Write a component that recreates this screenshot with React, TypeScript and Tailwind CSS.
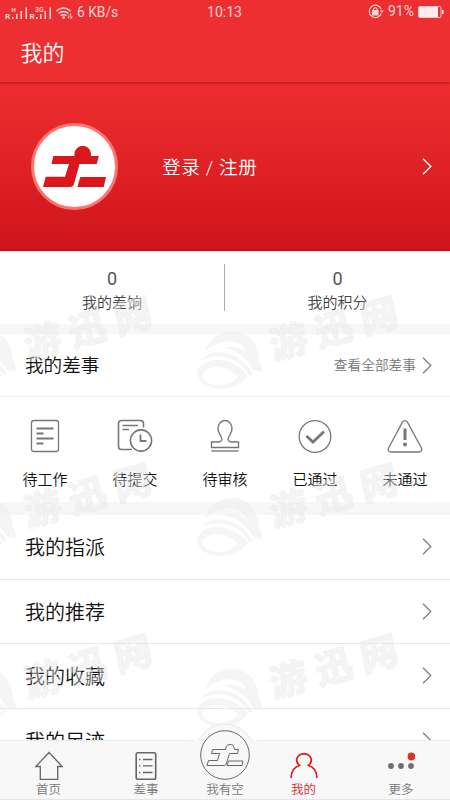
import React from 'react';

const Chevron: React.FC<{ className?: string }> = ({ className = 'text-[#808080]' }) => (
  <svg className={`h-[17px] w-[10px] shrink-0 ${className}`} viewBox="0 0 10 17" fill="none" stroke="currentColor" strokeWidth="1.3">
    <path d="M1 .8 8.8 8.5 1 16.2" />
  </svg>
);

const StatusBar: React.FC = () => (
  <div className="flex h-6 items-center justify-between pl-[5px] pr-[6px] font-normal text-[#ffd6d6]">
    <div className="flex w-[180px] items-center">
      <svg width="70" height="17" viewBox="0 0 70 17" fill="currentColor">
        <text x="0" y="15" fontSize="8" fontWeight="700">R</text>
        <text x="6.500" y="7.500" fontSize="6" fontWeight="700">H</text>
        <path d="M7 13h1.500v2H7zM11 10h1.500v5H11zM15.500 7H17v8h-1.500zM20.500 3.500H22V15h-1.500z" />
        <text x="24.500" y="15" fontSize="8" fontWeight="700">R</text>
        <text x="30" y="8" fontSize="7" fontWeight="500">3G</text>
        <path d="M31 13h1.500v2H31zM35 10h1.500v5H35zM39.500 7H41v8h-1.500zM44.500 3.500H46V15h-1.500z" />
        <g fill="none" stroke="currentColor" strokeWidth="1.500">
          <path d="M51.500 7q7-6 14 0M53.500 9.500q5-4 10 0M55.700 11.700q3-2 6 0" />
        </g>
        <circle cx="58.700" cy="13.500" r="1.300" />
        <path d="m62.800 14.500 1.500-5V14zM65.200 9.500h1v3h1.800l-2.300 3z" />
      </svg>
      <span className="ml-[2px] text-[13.800px]">6 KB/s</span>
    </div>
    <span className="text-[14px]">10:13</span>
    <div className="flex w-[180px] items-center justify-end">
      <svg className="-mt-px" width="16" height="15" viewBox="0 0 16 15" fill="none" stroke="currentColor" strokeWidth="1.100">
        <path d="M13.300 9.500A6.200 6.200 0 1 1 13.200 5" />
        <path d="m11.800 6.500 2.200 2.500 1.800-2.500z" fill="currentColor" stroke="none" />
        <path d="M4.500 6.500h5.500V11H4.500z" fill="currentColor" />
        <path d="M5.500 6.500V5q1.800-2.500 3.600 0v1.500" />
      </svg>
      <span className="ml-[4px] -mt-px text-[14px]">91%</span>
      <svg className="ml-[4px] -mt-px" width="26" height="12" viewBox="0 0 26 12" fill="#ffecec">
        <rect x=".5" y=".5" width="22.500" height="11" rx="1" fill="none" stroke="#ffc4c4" />
        <path d="M1 1h19v10H1zM24 4h1.500v4H24z" />
      </svg>
    </div>
  </div>
);

const Avatar: React.FC = () => (
  <div className="flex size-[87px] items-center justify-center rounded-full border-[3.500px] border-[#fb7672] bg-white">
    <svg className="h-[41px] w-[63px]" viewBox="0 0 63 41" fill="#da171d">
      <path d="M10.300 10h21.300a8.300 8.300 0 1 1 16.200 0h8l-2 8H36.500L31 38q-1 3-4 3H0l2.700-10.200H22L26 18H8.500z" />
      <path d="M37.300 31H63l-2.300 10H34.300z" />
    </svg>
  </div>
);

const tasks = [
  {
    label: '待工作',
    icon: (
      <>
        <rect x="4.500" y="3.500" width="27" height="31" rx="2.500" />
        <path d="M9.500 11.500h17M9.500 16.500h7M9.500 21.500h17M9.500 26.500h7" strokeWidth="1.800" />
      </>
    ),
  },
  {
    label: '待提交',
    icon: (
      <>
        <path d="M15 32.500H4.500q-3 0-3-3v-23q0-3 3-3h19q3 0 3 3v4" strokeWidth="1.600" />
        <path d="M5.500 8.500h15.500M5.500 12.500h6.500" strokeWidth="1.600" />
        <circle cx="24" cy="23.500" r="10.600" strokeWidth="1.600" />
        <path d="M23.500 17.500v6.500h6" strokeWidth="1.800" />
      </>
    ),
  },
  {
    label: '待审核',
    icon: (
      <>
        <path d="M4.500 30.500v-5.500h7.500q4.500-1 2-5.500c-1.500-3-3.500-5-3-9 .5-4 3.500-7 7-7s6.500 3 7 7c.5 4-1.500 6-3 9q-2.500 4.500 2 5.500h7.500v5.500z" strokeWidth="1.400" />
        <path d="M4.500 34h27" strokeWidth="1.400" />
      </>
    ),
  },
  {
    label: '已通过',
    icon: (
      <>
        <circle cx="18" cy="19.500" r="15.800" />
        <path d="m9.500 19 6.500 6L27 14.500" strokeWidth="2.800" />
      </>
    ),
  },
  {
    label: '未通过',
    icon: (
      <>
        <path d="M15.500 5.200q2.500-3 5 0l13.800 25.500q1.500 4-2.300 4.300H4q-3.800-.3-2.300-4.300z" />
        <path d="M18 11.500V23" strokeWidth="3" />
        <circle cx="18" cy="27.500" r="2" fill="currentColor" stroke="none" />
      </>
    ),
  },
];

const stats = ['我的差饷', '我的积分'];
const links = ['我的指派', '我的推荐', '我的收藏', '我的足迹'];

// one stamp is the globe plus its slanted caption
const WatermarkStamp: React.FC<{ x: number; y: number }> = ({ x, y }) => (
  <g transform={`translate(${x} ${y})`}>
    <path d="M8 20Q15 0 37 0q22 2 25 28l4 13-10-2Q46 20 26 17q13-3 23 4Q45 10 34 10 18 11 8 20z" />
    <path d="M4 30Q14 18 30 22q17 5 26 21l-4 1Q44 29 27 26q-14-2-23 4z" />
    <path d="M1 38Q9 27 25 29q18 4 26 16-12 13-27 13Q5 57 1 46q-1-4 0-8zm4 6q2 9 14 10 13 1 22-8-8-9-20-10-12 0-16 8z" fillRule="evenodd" />
    <text x="78" y="29" transform="rotate(-16 78 29) skewX(-4)" fontSize="38" fontWeight="900" letterSpacing="9" stroke="#e8e8e8" strokeOpacity=".3">
      游迅网
    </text>
  </g>
);

const Watermark: React.FC = () => (
  <svg className="pointer-events-none absolute inset-0" width="450" height="741" viewBox="0 0 450 741" fill="#e8e8e8" fillOpacity=".45">
    {[331, 498, 669].map((y) => (
      <React.Fragment key={y}>
        <WatermarkStamp x={-49} y={y} />
        <WatermarkStamp x={197} y={y} />
      </React.Fragment>
    ))}
  </svg>
);

const App: React.FC = () => {
  return (
    <div className="relative flex h-[800px] w-[450px] flex-col overflow-hidden bg-white font-[Roboto,'Noto_Sans_CJK_SC',sans-serif] font-[350] text-[#111]">
      <header className="relative z-10 h-[82px] shrink-0 bg-[#ed2f31] text-white shadow-[0_1px_3px_rgba(100,0,0,0.5)]">
        <StatusBar />
        <h1 className="mt-[13px] pl-[20.500px] text-[22px] leading-[34px]">我的</h1>
      </header>

      <section className="flex h-[169px] shrink-0 items-center border-b border-[#d8000c] bg-linear-to-b from-[#ee2e30] to-[#cf131b] pl-[31px] pr-[18px] text-white">
        <Avatar />
        <span className="ml-[44px] flex-1 pt-[4px] text-[18.700px] tracking-[0.600px]">登录 / 注册</span>
        <Chevron className="text-white" />
      </section>

      <section className="flex h-[73px] shrink-0 pt-[13px]">
        {stats.map((label, i) => (
          <div key={label} className={`flex h-[47px] w-1/2 flex-col items-center ${i === 0 ? 'border-r border-[#aaa]' : ''}`}>
            <span className="mt-[4px] text-[18px] font-normal leading-[22px] text-[#555]">0</span>
            <span className="mt-[1px] text-[15px] leading-[24px] text-[#444]">{label}</span>
          </div>
        ))}
      </section>

      <section className="h-[191px] shrink-0 border-y-[10px] border-b-[13px] border-[#f7f7f7]">
        <div className="flex h-[63px] items-center border-b border-[#ebebeb] pl-[25px] pr-[18px]">
          <h2 className="flex-1 pt-[4px] text-[18.600px]">我的差事</h2>
          <span className="mr-[6px] pt-px text-[13.700px] text-[#777]">查看全部差事</span>
          <Chevron />
        </div>
        <div className="flex pt-[20px]">
          {tasks.map((task) => (
            <div key={task.label} className="flex w-1/5 flex-col items-center">
              <svg className="h-[38px] w-[36px] overflow-visible text-[#777]" viewBox="0 0 36 38" fill="none" stroke="currentColor" strokeWidth="1.300">
                {task.icon}
              </svg>
              <span className="mt-[13px] text-[15px] leading-[24px]">{task.label}</span>
            </div>
          ))}
        </div>
      </section>

      <section className="min-h-0 flex-1 overflow-hidden">
        {links.map((label) => (
          <div key={label} className="flex h-[64.500px] items-center border-b border-[#e9e9e9] pl-[25px] pr-[18px]">
            <span className="flex-1 pt-[3px] text-[20px]">{label}</span>
            <Chevron />
          </div>
        ))}
      </section>

      <Watermark />

      <nav className="relative flex h-[60px] shrink-0 border-b border-[#e6e6e6] bg-[#f8f8f8] text-[12.500px] text-[#777]">
        <svg className="absolute left-[190px] top-[-17px]" width="70" height="24" viewBox="0 0 70 24">
          <path d="M0 17.500h8Q18 1 35 1t27 16.500h8V24H0z" fill="#f8f8f8" />
          <path d="M8 17.500Q18 1 35 1t27 16.500" fill="none" stroke="#e8e8e8" />
        </svg>
        <div className="flex w-[97px] flex-col items-center border-t border-[#ebebeb] pt-[10px]">
          <svg className="shrink-0" width="28" height="29" viewBox="0 0 28 29" fill="none" stroke="#666" strokeWidth="1.300">
            <path d="M14 1.500.8 15.500h4.500v12.800h17.400V15.500h4.500z" />
          </svg>
          <span className="leading-[19px]">首页</span>
        </div>
        <div className="flex w-[98px] flex-col items-center border-t border-[#ebebeb] pt-[10px]">
          <svg className="shrink-0" width="22" height="29" viewBox="0 0 22 29" fill="none" stroke="#666" strokeWidth="1.300">
            <rect x="1.200" y="1.700" width="19.500" height="26.500" rx="1.800" strokeWidth="1.600" />
            <path d="M4 8.500h1.500M4 14.800h1.500M4 21.500h1.500M8 8.500h9.500M8 14.800h9.500M8 21.500h9.500" />
          </svg>
          <span className="leading-[19px]">差事</span>
        </div>
        <div className="relative -mt-[10px] flex w-[60px] flex-col items-center">
          <svg className="shrink-0" width="50" height="50" viewBox="0 0 50 50" fill="none" stroke="#666" strokeWidth="1">
            <circle cx="25" cy="25" r="24.300" />
            <path d="M12.500 19.500h13q.5-5 4.500-5t4.500 5h4l-1 4h-8l-3.300 10.500q-.5 1.500-2 1.500H7l1.500-5h9l2-7h-8z" />
            <path d="M28.500 31h14.500l-1 4.500H27z" />
          </svg>
          <span className="leading-[19px]">我有空</span>
        </div>
        <div className="flex w-[97px] flex-col items-center border-t border-[#ebebeb] pt-[10px] text-[#e3191d]">
          <svg className="shrink-0" width="28" height="29" viewBox="0 0 28 29" fill="none" stroke="currentColor" strokeWidth="1.700">
            <path d="M1 27Q1.500 16.500 9.500 14.500C3.500 9 8 2.800 14 2.800s10.500 6.200 4.500 11.700q8 2 8.500 12.500" />
          </svg>
          <span className="leading-[19px]">我的</span>
        </div>
        <div className="flex w-[98px] flex-col items-center border-t border-[#ebebeb] pt-[10px]">
          <svg className="shrink-0" width="28" height="29" viewBox="0 0 28 29" fill="#707070">
            <circle cx="4" cy="15" r="2.900" />
            <circle cx="14" cy="15" r="2.900" />
            <circle cx="24" cy="15" r="2.900" />
            <circle cx="24.500" cy="5.500" r="3.900" fill="#df321e" />
          </svg>
          <span className="leading-[19px]">更多</span>
        </div>
      </nav>
    </div>
  );
};

export default App;
